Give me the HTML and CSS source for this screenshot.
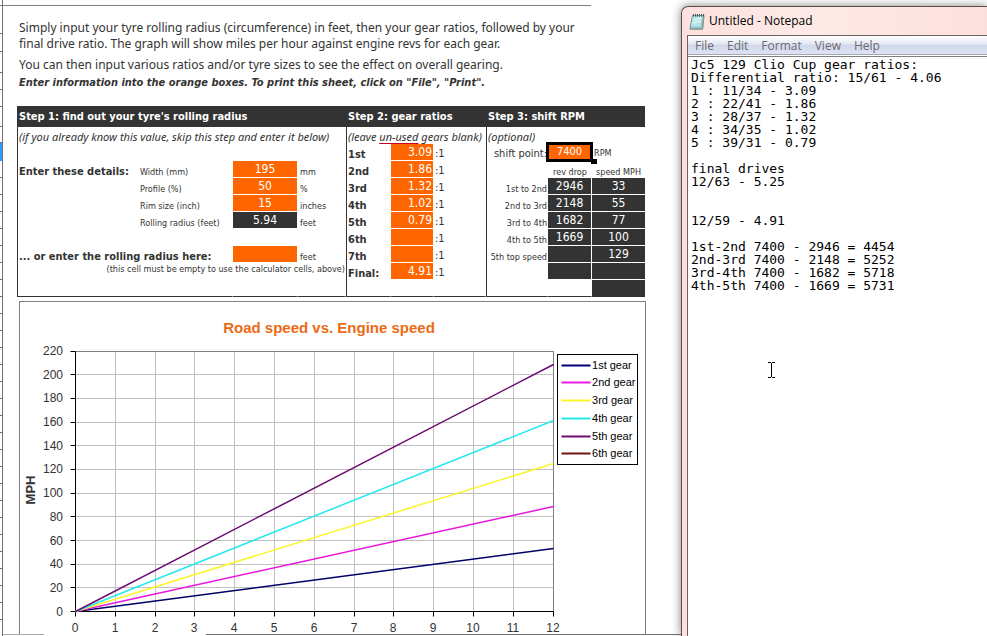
FILE: index.html
```html
<!DOCTYPE html>
<html lang="en">
<head>
<meta charset="utf-8">
<title>Gear ratio calculator</title>
<link rel="stylesheet" href="styles.css">
</head>
<body>
<div class="row-heads"><i></i><i></i><i></i><i></i><i></i><i></i><i></i><i></i><i class="current"></i><i class="rest"></i></div>
<main class="sheet">
  <header class="intro">
    <p>Simply input your tyre rolling radius (circumference) in feet, then your gear ratios, followed by your<br>final drive ratio. The graph will show miles per hour against engine revs for each gear.</p>
    <p>You can then input various ratios and/or tyre sizes to see the effect on overall gearing.</p>
    <p class="note">Enter information into the orange boxes. To print this sheet, click on "File", "Print".</p>
  </header>

  <div class="steps">
    <section class="step">
      <h2>Step 1: find out your tyre's rolling radius</h2>
      <p class="hint">(if you already know this value, skip this step and enter it below)</p>
      <table class="tyre">
        <colgroup><col class="c-lead"><col><col class="c-size"><col class="c-unit"></colgroup>
        <tr><td colspan="4"></td></tr>
        <tr><th>Enter these details:</th><td><label for="width">Width (mm)</label></td><td class="num"><input id="width" value="195"></td><td>mm</td></tr>
        <tr><td></td><td><label for="profile">Profile (%)</label></td><td class="num"><input id="profile" value="50"></td><td>%</td></tr>
        <tr><td></td><td><label for="rim">Rim size (inch)</label></td><td class="num"><input id="rim" value="15"></td><td>inches</td></tr>
        <tr><td></td><td>Rolling radius (feet)</td><td class="num"><output>5.94</output></td><td>feet</td></tr>
        <tr><td colspan="4"></td></tr>
        <tr><th colspan="2"><label for="radius">... or enter the rolling radius here:</label></th><td class="num"><input id="radius"></td><td>feet</td></tr>
        <tr><td colspan="4" class="aside">(this cell must be empty to use the calculator cells, above)</td></tr>
        <tr class="last"><td colspan="2"></td><td></td><td></td></tr>
      </table>
    </section>

    <section class="step">
      <h2>Step 2: gear ratios</h2>
      <p class="hint">(leave <span class="typo">un-used</span> gears blank)</p>
      <table class="gears">
        <colgroup><col class="c-gear"><col class="c-ratio"><col></colgroup>
        <tr><th><label for="g1">1st</label></th><td class="num"><input id="g1" value="3.09"></td><td>:1</td></tr>
        <tr><th><label for="g2">2nd</label></th><td class="num"><input id="g2" value="1.86"></td><td>:1</td></tr>
        <tr><th><label for="g3">3rd</label></th><td class="num"><input id="g3" value="1.32"></td><td>:1</td></tr>
        <tr><th><label for="g4">4th</label></th><td class="num"><input id="g4" value="1.02"></td><td>:1</td></tr>
        <tr><th><label for="g5">5th</label></th><td class="num"><input id="g5" value="0.79"></td><td>:1</td></tr>
        <tr><th><label for="g6">6th</label></th><td class="num"><input id="g6"></td><td>:1</td></tr>
        <tr><th><label for="g7">7th</label></th><td class="num"><input id="g7"></td><td>:1</td></tr>
        <tr><th><label for="gf">Final:</label></th><td class="num"><input id="gf" value="4.91"></td><td>:1</td></tr>
        <tr class="last"><td></td><td></td><td></td></tr>
      </table>
    </section>

    <section class="step">
      <h2>Step 3: shift RPM</h2>
      <p class="hint">(optional)</p>
      <table class="shift">
        <colgroup><col><col class="c-rev"><col class="c-mph"></colgroup>
        <tr><td class="point"><label for="rpm">shift point:</label></td><td class="num active"><input id="rpm" value="7400"></td><td class="unit">RPM</td></tr>
        <tr class="heads"><td></td><td>rev drop</td><td>speed MPH</td></tr>
        <tr><td>1st to 2nd</td><td class="num"><output>2946</output></td><td class="num"><output>33</output></td></tr>
        <tr><td>2nd to 3rd</td><td class="num"><output>2148</output></td><td class="num"><output>55</output></td></tr>
        <tr><td>3rd to 4th</td><td class="num"><output>1682</output></td><td class="num"><output>77</output></td></tr>
        <tr><td>4th to 5th</td><td class="num"><output>1669</output></td><td class="num"><output>100</output></td></tr>
        <tr><td>5th top speed</td><td class="num"><output></output></td><td class="num"><output>129</output></td></tr>
        <tr><td></td><td class="num"><output></output></td><td class="num"><output></output></td></tr>
        <tr class="last"><td></td><td></td><td class="filled"></td></tr>
      </table>
    </section>
  </div>

  <figure class="chart">
    <svg viewBox="0 -1 625 332" role="img" aria-label="Road speed vs. Engine speed">
      <text class="title" x="309" y="30">Road speed vs. Engine speed</text>
      <text class="axis-name" transform="translate(15 187) rotate(-90)">MPH</text>
      <g transform="translate(.5 .5)" fill="none">
        <path stroke="#c0c0c0" d="M55 71H533M55 95H533M55 119H533M55 142H533M55 166H533M55 190H533M55 213H533M55 237H533M55 261H533M55 284H533M95 48V308M135 48V308M174 48V308M214 48V308M254 48V308M294 48V308M334 48V308M373 48V308M413 48V308M453 48V308M493 48V308"/>
        <path stroke="#808080" d="M55 48H533V308"/>
        <path stroke="#000" d="M55 48V313M50 308H533M50 48H55M50 71H55M50 95H55M50 119H55M50 142H55M50 166H55M50 190H55M50 213H55M50 237H55M50 261H55M50 284H55M95 308V313M135 308V313M174 308V313M214 308V313M254 308V313M294 308V313M334 308V313M373 308V313M413 308V313M453 308V313M493 308V313M533 308V313"/>
        <g stroke-width="1.5">
          <path stroke="#000066" d="M55 308L533 245"/>
          <path stroke="#e815dc" d="M55 308L533 203"/>
          <path stroke="#fcf52a" d="M55 308L533 160"/>
          <path stroke="#25e8ee" d="M55 308L533 117"/>
          <path stroke="#6a0a72" d="M55 308L533 61"/>
        </g>
        <rect x="537" y="51" width="80" height="110" fill="#fff" stroke="#000"/>
        <g stroke-width="2">
          <path stroke="#00007a" d="M541 62H570"/>
          <path stroke="#f01ae6" d="M541 79H570"/>
          <path stroke="#fcf52a" d="M541 97H570"/>
          <path stroke="#25e8ee" d="M541 115H570"/>
          <path stroke="#6a0a72" d="M541 133H570"/>
          <path stroke="#6e1418" d="M541 150H570"/>
        </g>
      </g>
      <g class="y-labels">
        <text x="43" y="52">220</text><text x="43" y="76">200</text><text x="43" y="99">180</text><text x="43" y="123">160</text><text x="43" y="147">140</text><text x="43" y="170">120</text><text x="43" y="194">100</text><text x="43" y="218">80</text><text x="43" y="242">60</text><text x="43" y="265">40</text><text x="43" y="289">20</text><text x="43" y="313">0</text>
      </g>
      <g class="x-labels">
        <text x="55" y="329">0</text><text x="95" y="329">1</text><text x="135" y="329">2</text><text x="174" y="329">3</text><text x="214" y="329">4</text><text x="254" y="329">5</text><text x="294" y="329">6</text><text x="334" y="329">7</text><text x="373" y="329">8</text><text x="413" y="329">9</text><text x="453" y="329">10</text><text x="493" y="329">11</text><text x="533" y="329">12</text>
      </g>
      <g class="key">
        <text x="572" y="66">1st gear</text><text x="572" y="83">2nd gear</text><text x="572" y="101">3rd gear</text><text x="572" y="119">4th gear</text><text x="572" y="137">5th gear</text><text x="572" y="154">6th gear</text>
      </g>
    </svg>
  </figure>
  <div class="tabs-edge"></div>
</main>

<aside class="notepad">
  <div class="titlebar">
    <svg width="16" height="17" viewBox="0 0 16 17" aria-hidden="true">
      <path d="M3.5 2.5H15L13.5 16H.8z" fill="#8fcbd3" stroke="#5f8f98" stroke-width=".8"/>
      <path d="M4 3.5h9l-1.200 10H2z" fill="#b5e3e6"/>
      <path d="M4 7L12.600 5M3.500 10L12 8" stroke="#d9f4f4" stroke-width="1.500"/>
      <path d="M15 2.500L13.600 16.200H1" fill="none" stroke="#a08d74" stroke-width="1"/>
      <path d="M4.500 1v2.500M6.500 1v2.500M8.500 1v2.500M10.500 1v2.500M12.500 1v2.500M14.500 1v2.500" stroke="#47585c" stroke-width="1"/>
    </svg>
    <h1>Untitled - Notepad</h1>
  </div>
  <div class="client">
    <nav class="menu"><button>File</button><button>Edit</button><button>Format</button><button>View</button><button>Help</button></nav>
    <textarea aria-label="Text" spellcheck="false">Jc5 129 Clio Cup gear ratios:
Differential ratio: 15/61 - 4.06
1 : 11/34 - 3.09
2 : 22/41 - 1.86
3 : 28/37 - 1.32
4 : 34/35 - 1.02
5 : 39/31 - 0.79

final drives
12/63 - 5.25


12/59 - 4.91

1st-2nd 7400 - 2946 = 4454
2nd-3rd 7400 - 2148 = 5252
3rd-4th 7400 - 1682 = 5718
4th-5th 7400 - 1669 = 5731</textarea>
    <svg class="pointer" width="8" height="16" viewBox="0 0 8 16" aria-hidden="true"><path d="M0 .5H3M4 .5H7M0 15.500H3M4 15.500H7M3.500 1V15" stroke="#000" fill="none"/></svg>
  </div>
</aside>
</body>
</html>
```
FILE: styles.css
```css
* { box-sizing: border-box; }

body {
  margin: 0;
  min-height: 100vh;
  display: flex;
  overflow: hidden;
  background: #fff;
  color: #333;
  font: 12px/16px "DejaVu Sans Condensed", "DejaVu Sans", sans-serif;
}

h1, h2, p, figure { margin: 0; }

/* Spreadsheet row headings */
.row-heads {
  flex: none;
  width: 3px;
  display: grid;
  grid-template-rows: 6px 28px 18px 21px 17px 17px 20px 16px 18px 1fr;
  border-right: 1px solid #707070;
}
.row-heads i { border-bottom: 1px solid #707070; }
.row-heads .current { background: #3399ff; border: 0; }
.row-heads .rest {
  border: 0;
  background: repeating-linear-gradient(#fff 0 16px, #707070 16px 17px);
}

.sheet {
  flex: 0 1 calc(69% - 3px);
  display: flex;
  flex-direction: column;
}

.intro {
  width: 588px;
  max-width: 100%;
  height: 101px;
  margin-top: 5px;
  padding: 14px 0 0 16px;
  border-top: 1px solid #808080;
  white-space: nowrap;
}
.intro p { margin-bottom: 5px; font-family: "Noto Sans", sans-serif; font-size: 12px; }
.intro .note { margin-top: -3px; font: italic bold 11px/16px "DejaVu Sans Condensed", "DejaVu Sans", sans-serif; }

/* Calculator steps */
.steps {
  display: grid;
  grid-template-columns: 329fr 140fr 159fr;
  margin: 0 36px 0 14px;
}
.step {
  border-left: 1px solid #333;
  white-space: nowrap;
}
.step h2 {
  height: 21px;
  margin-left: -1px;
  padding-left: 2px;
  background: #333;
  color: #fff;
  font-size: 11px;
  line-height: 22px;
}
.hint { height: 17px; padding-left: 1px; font: italic 11px/20px "Noto Sans", sans-serif; }
.typo { text-decoration: underline #c00020; text-underline-offset: 2px; }

table { width: 100%; table-layout: fixed; border-collapse: separate; border-spacing: 0; }
tr { height: 17px; }
td, th { height: 17px; padding: 0 1px; text-align: left; vertical-align: bottom; font-size: 9px; line-height: 12px; font-weight: normal; }
th { font-size: 11px; line-height: 13px; font-weight: bold; }
.c-lead { width: 121px; }
.c-size { width: 65px; }
.c-unit { width: 48px; }
.c-gear { width: 44px; }
.c-ratio { width: 43px; }
.c-rev { width: 44px; }
.c-mph { width: 53px; }

.num { padding: 0 1px 1px 0; }
input, output {
  display: block;
  width: 100%;
  height: 16px;
  padding: 0;
  border: 0;
  border-radius: 0;
  color: #fff;
  font: 12px/16px "DejaVu Sans Condensed", "DejaVu Sans", sans-serif;
  text-align: center;
}
input { background: #f60; }
output { background: #333; }
.tyre td:last-child { padding-left: 2px; }
.tyre .aside { padding: 0 1px; text-align: right; vertical-align: top; }
.gears input { text-align: right; padding-right: 1px; }
.gears td { font-size: 11px; line-height: 14px; }
.shift td { text-align: right; }
.shift .num, .shift .heads td { text-align: center; }
.shift td.point { font-size: 11px; line-height: 15px; }
.shift td.unit { text-align: left; padding-left: 2px; line-height: 15px; }
.shift .num:last-child { padding-right: 0; }

.active { position: relative; }
.active input { font-size: 11px; outline: 3px solid #000; outline-offset: -1px; }
.active::after {
  content: "";
  position: absolute;
  right: -5px;
  bottom: -3px;
  width: 6px;
  height: 5px;
  background: #000;
}

.last td { border-bottom: 1px solid #333; border-right: 1px solid #fff; }
.last .filled { background: #333; border-right: 0; }

/* Chart */
.chart {
  margin: 4px 35px 0 16px;
  border: 1px solid #808080;
  border-bottom: 0;
}
.chart svg { display: block; width: 100%; height: auto; }
.chart text { font-family: "Liberation Sans", Arial, sans-serif; font-size: 12px; fill: #333; }
.chart .title { font-size: 15px; font-weight: bold; fill: #ec6a14; text-anchor: middle; }
.chart .axis-name { font-size: 13px; font-weight: bold; text-anchor: middle; }
.chart .y-labels text { text-anchor: end; }
.chart .x-labels text { text-anchor: middle; }
.chart .key text { font-size: 11px; fill: #000; }
.tabs-edge { height: 1px; background: linear-gradient(90deg, #aaa 6%, #fff 6% 30%, #707070 30%); }

/* Notepad window */
.notepad {
  flex: 1;
  position: relative;
  display: flex;
  flex-direction: column;
  margin-top: 6px;
  padding-left: 5px;
  border: 1px solid #5a4d4c;
  border-width: 1px 0 0 1px;
  border-radius: 7px 0 0 0;
  background: linear-gradient(90deg, #fde0dd, #fdeae7 40%, #fde0dc);
  box-shadow: 0 0 10px rgba(0, 0, 0, .5);
  font-family: "Open Sans", "Noto Sans", sans-serif;
}
.titlebar { display: flex; align-items: center; gap: 4px; height: 28px; padding-left: 2px; }
.titlebar h1 { color: #000; font-size: 12px; font-weight: normal; }
.client {
  flex: 1;
  display: flex;
  flex-direction: column;
  position: relative;
  border: 1px solid #6a6263;
  border-width: 1px 0 0 1px;
  background: #fff;
}
.menu {
  display: flex;
  gap: 13px;
  height: 19px;
  padding-left: 7px;
  border-bottom: 1px solid #a8a8b4;
  background: linear-gradient(#fff, #e4e8f4 45%, #d2d8ec 50%, #dde3f4);
}
.menu button { padding: 0; border: 0; background: none; color: #6b6b70; font: 12px/20px "Open Sans", "Noto Sans", sans-serif; }
textarea {
  flex: 1;
  margin-top: 1px;
  padding: 1px 0 0 3px;
  border: 0;
  border-top: 1px solid #808080;
  outline: 0;
  resize: none;
  background: #fff;
  color: #000;
  font: 13px/13px "DejaVu Sans Mono", monospace;
}
.pointer { position: absolute; left: 80px; top: 326px; }
```
